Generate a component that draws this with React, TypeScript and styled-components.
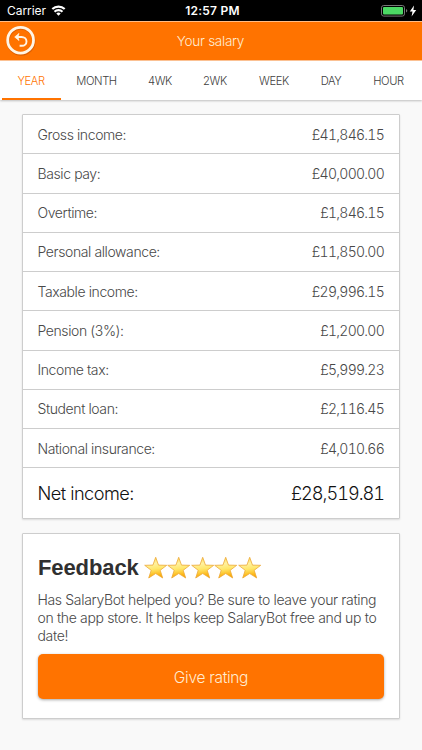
import React from "react";
import styled, { createGlobalStyle } from "styled-components";

const ORANGE = "#ff7300";

const GlobalStyle = createGlobalStyle`
  *, *::before, *::after { box-sizing: border-box; }
  body {
    margin: 0;
    background: #f9f9f9;
    font-family: Inter, "Liberation Sans", sans-serif;
    font-weight: 300;
    color: #484848;
  }
`;

const Screen = styled.div`
  width: 422px;
  height: 750px;
  overflow: hidden;
  background: #f9f9f9;
  display: flex;
  flex-direction: column;
`;

const StatusBar = styled.div`
  flex: none;
  height: 21px;
  background: #000;
  color: #fff;
  display: grid;
  grid-template-columns: 1fr auto 1fr;
  align-items: center;
  padding: 0 5px 0 7px;
  font-size: 12px;
`;

const Carrier = styled.div`
  display: flex;
  align-items: center;
  gap: 5px;
  font-weight: 400;
  letter-spacing: -0.05px;
`;

const Clock = styled.div`
  font-weight: 600;
  letter-spacing: 0.25px;
  padding-left: 1px;
`;

const Power = styled.div`
  display: flex;
  justify-content: flex-end;
  align-items: center;
`;

const Header = styled.header`
  flex: none;
  height: 40px;
  background: ${ORANGE};
  border-top: 1px solid #ffbd86;
  border-bottom: 1px solid #ffc596;
  display: grid;
  grid-template-columns: 42px 1fr 42px;
  align-items: center;
  color: #ffecd2;
`;

const Title = styled.div`
  text-align: center;
  font-size: 13.6px;
  letter-spacing: -0.3px;
  padding-right: 1px;
`;

const BackButton = styled.button`
  border: 0;
  background: none;
  padding: 0 0 0 5px;
  height: 34px;
  margin-top: -2px;
  svg { display: block; }
`;

const Tabs = styled.nav`
  flex: none;
  height: 39px;
  background: #fff;
  padding-left: 2px;
  display: flex;
  box-shadow: 0 1px 2px rgba(0, 0, 0, 0.24);
`;

const Tab = styled.div<{ $width: number; $active?: boolean }>`
  width: ${(p) => p.$width}px;
  display: flex;
  align-items: center;
  justify-content: center;
  font-size: 11.2px;
  letter-spacing: -0.38px;
  padding-right: 1px;
  padding-top: ${(p) => (p.$active ? 2 : 0)}px;
  color: ${(p) => (p.$active ? ORANGE : "#404040")};
  border-bottom: ${(p) => (p.$active ? `2px solid ${ORANGE}` : "0")};
`;

const Content = styled.main`
  padding: 14px 22px 0;
  display: flex;
  flex-direction: column;
  gap: 14px;
`;

const Card = styled.section`
  background: #fff;
  border: 1px solid #cdcdcd;
  border-radius: 1px;
  box-shadow: 0 1px 2px rgba(0, 0, 0, 0.12);
`;

const Amount = styled.span`
  font-variant-numeric: tabular-nums;
  letter-spacing: -0.052em;
`;

const Row = styled.div`
  height: 39.28px;
  padding: 0 15px 0 14.5px;
  display: flex;
  align-items: center;
  justify-content: space-between;
  border-bottom: 1px solid #cdcdcd;
  font-size: 14px;
  letter-spacing: -0.4px;
`;

const NetRow = styled(Row)`
  height: 49.5px;
  border-bottom: 0;
  font-size: 18.2px;
  letter-spacing: -0.55px;
  color: #111;
  ${Amount} { letter-spacing: -0.056em; }
`;

const FeedbackCard = styled(Card)`
  height: 186px;
  padding: 20px 15px 0;
`;

const FeedbackHeading = styled.h2`
  display: flex;
  align-items: center;
  margin: 0;
  height: 28px;
  font-size: 22px;
  font-weight: 700;
  font-family: "Liberation Sans", Arial, sans-serif;
  letter-spacing: -0.1px;
  color: #303030;
`;

const Stars = styled.span`
  display: flex;
  margin-left: 5px;
`;

const Message = styled.p`
  margin: 9px 0 0 -0.5px;
  font-size: 14px;
  line-height: 18.2px;
  letter-spacing: -0.34px;
  white-space: nowrap;
`;

const RatingButton = styled.button`
  display: block;
  width: 100%;
  height: 45px;
  margin-top: 8px;
  padding: 2px 0 0;
  border: 0;
  border-radius: 5px;
  background: ${ORANGE};
  color: #ffecd2;
  font: inherit;
  font-size: 15.5px;
  letter-spacing: -0.3px;
  box-shadow: 0 1px 3px rgba(0, 0, 0, 0.35);
`;

const WifiIcon = () => (
  <svg width="15" height="11" viewBox="0 0 14 11" fill="none" stroke="#fff" strokeWidth="2.1">
    <path d="M.8 4.1a8.9 8.9 0 0 1 12.4 0" />
    <path d="M3 6.8a5.7 5.7 0 0 1 8 0" />
    <path d="M7 10.8 4.8 8.6a3.2 3.2 0 0 1 4.4 0Z" fill="#fff" stroke="none" />
  </svg>
);

const BatteryIcon = () => (
  <svg width="36" height="12" viewBox="0 0 36 12">
    <rect x=".5" y=".5" width="23" height="10.6" rx="2.2" fill="none" stroke="#777" />
    <rect x="2" y="2" width="20" height="7.6" rx="1" fill="#4cd964" />
    <path d="M25 4v3.6q1.3-.5 1.3-1.8T25 4Z" fill="#777" />
    <path d="M33 .6 28.8 6.5h2.7L30.6 11.4 35.2 5h-2.8Z" fill="#fff" />
  </svg>
);

const BackIcon = () => (
  <svg width="32" height="34" viewBox="0 0 32 34" fill="none">
    <circle cx="16" cy="18.2" r="13" stroke="#bd4c00" strokeOpacity=".5" strokeWidth="3" />
    <circle cx="15.6" cy="17.2" r="12.9" stroke="#fff5e6" strokeWidth="2.8" />
    <path d="M12 14h4.5c3 0 5 1.9 5 4.4s-2 4.4-4.6 4.4h-2.3" stroke="#fff5e6" strokeWidth="1.9" />
    <path d="m14 10.4-4.3 3.6 4.3 3.5-1.1-3.5Z" fill="#fff5e6" stroke="#fff5e6" strokeWidth=".7" />
  </svg>
);

const StarIcon = () => (
  <svg width="23.5" height="24" viewBox="0 0 23.5 24">
    <defs>
      <linearGradient id="gold" x1="0" y1="0" x2="0.15" y2="1">
        <stop offset="0" stopColor="#ffd83c" />
        <stop offset=".36" stopColor="#fff1a0" />
        <stop offset=".62" stopColor="#ffe76a" />
        <stop offset="1" stopColor="#fca900" />
      </linearGradient>
    </defs>
    <path
      d="m11.7 1.3 2.8 7.8 8.2.2-6.5 5 2.5 7.7-7-4.5L4.7 22l2.5-7.7-6.5-5 8.2-.2Z"
      fill="url(#gold)"
      stroke="#eca83a"
      strokeWidth=".8"
      strokeLinejoin="round"
    />
  </svg>
);

const tabs: [string, number][] = [
  ["YEAR", 59],
  ["MONTH", 72],
  ["4WK", 55],
  ["2WK", 55],
  ["WEEK", 63],
  ["DAY", 51],
  ["HOUR", 64],
];

const rows = [
  ["Gross income:", "£41,846.15"],
  ["Basic pay:", "£40,000.00"],
  ["Overtime:", "£1,846.15"],
  ["Personal allowance:", "£11,850.00"],
  ["Taxable income:", "£29,996.15"],
  ["Pension (3%):", "£1,200.00"],
  ["Income tax:", "£5,999.23"],
  ["Student loan:", "£2,116.45"],
  ["National insurance:", "£4,010.66"],
];

export default function App() {
  return (
    <>
      <GlobalStyle />
      <Screen>
        <StatusBar>
          <Carrier>
            Carrier
            <WifiIcon />
          </Carrier>
          <Clock>12:57 PM</Clock>
          <Power>
            <BatteryIcon />
          </Power>
        </StatusBar>
        <Header>
          <BackButton aria-label="Back">
            <BackIcon />
          </BackButton>
          <Title>Your salary</Title>
        </Header>
        <Tabs>
          {tabs.map(([label, width], i) => (
            <Tab key={label} $width={width} $active={i === 0}>
              {label}
            </Tab>
          ))}
        </Tabs>
        <Content>
          <Card>
            {rows.map(([label, value]) => (
              <Row key={label}>
                <span>{label}</span>
                <Amount>{value}</Amount>
              </Row>
            ))}
            <NetRow>
              <span>Net income:</span>
              <Amount>£28,519.81</Amount>
            </NetRow>
          </Card>
          <FeedbackCard>
            <FeedbackHeading>
              Feedback
              <Stars>
                {[0, 1, 2, 3, 4].map((n) => (
                  <StarIcon key={n} />
                ))}
              </Stars>
            </FeedbackHeading>
            <Message>
              Has SalaryBot helped you? Be sure to leave your rating
              <br />
              on the app store. It helps keep SalaryBot free and up to
              <br />
              date!
            </Message>
            <RatingButton>Give rating</RatingButton>
          </FeedbackCard>
        </Content>
      </Screen>
    </>
  );
}
